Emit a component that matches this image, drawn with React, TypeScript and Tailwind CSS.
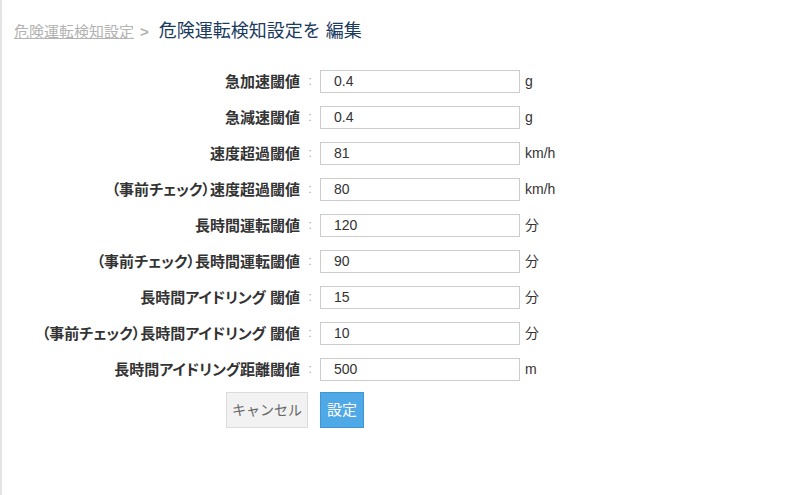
const rows = [
  { label: '急加速閾値', value: '0.4', unit: 'g' },
  { label: '急減速閾値', value: '0.4', unit: 'g' },
  { label: '速度超過閾値', value: '81', unit: 'km/h' },
  { label: '（事前チェック）速度超過閾値', value: '80', unit: 'km/h' },
  { label: '長時間運転閾値', value: '120', unit: '分' },
  { label: '（事前チェック）長時間運転閾値', value: '90', unit: '分' },
  { label: '長時間アイドリング 閾値', value: '15', unit: '分' },
  { label: '（事前チェック）長時間アイドリング 閾値', value: '10', unit: '分' },
  { label: '長時間アイドリング距離閾値', value: '500', unit: 'm' },
];

export default function App() {
  return (
    <div className="h-[495px] w-[796px] overflow-hidden border-l-2 border-[#e4e4e4] bg-white font-['Liberation_Sans','Noto_Sans_CJK_JP',sans-serif] text-[#333]">
      <div className="flex items-baseline pl-[12px] pt-[19px]">
        <a className="text-[15px] leading-[24px] text-[#b3b3b3] underline">危険運転検知設定</a>
        <span className="ml-[6px] text-[15px] font-bold text-[#b3b3b3]">&gt;</span>
        <h1 className="ml-[10px] text-[18px] leading-[24px] text-[#1a3a5e]">危険運転検知設定を 編集</h1>
      </div>

      <form className="mt-[19px]">
        {rows.map((r) => (
          <div key={r.label} className="flex h-[36px] items-center">
            <label className="w-[298px] whitespace-pre text-right text-[15px] font-bold leading-none text-[#333] [font-feature-settings:'palt']">
              {r.label}
            </label>
            <span className="w-[20px] text-center text-[13px] text-[#aaa]">:</span>
            <input
              readOnly
              value={r.value}
              className="h-[23px] w-[200px] border border-[#ccc] bg-white px-[13px] text-[14px] text-[#333] outline-none"
            />
            <span className="ml-[5px] text-[14px] text-[#333]">{r.unit}</span>
          </div>
        ))}

        <div className="mt-[5px] flex">
          <div className="flex w-[306px] justify-end">
            <button type="button" className="h-[36px] w-[82px] border border-[#dcdcdc] bg-[#f2f2f2] text-[14px] text-[#666]">
              キャンセル
            </button>
          </div>
          <button type="button" className="ml-[12px] h-[36px] w-[44px] border border-[#3d97d4] bg-[#4ea9e6] text-[15px] text-white">
            設定
          </button>
        </div>
      </form>
    </div>
  );
}
